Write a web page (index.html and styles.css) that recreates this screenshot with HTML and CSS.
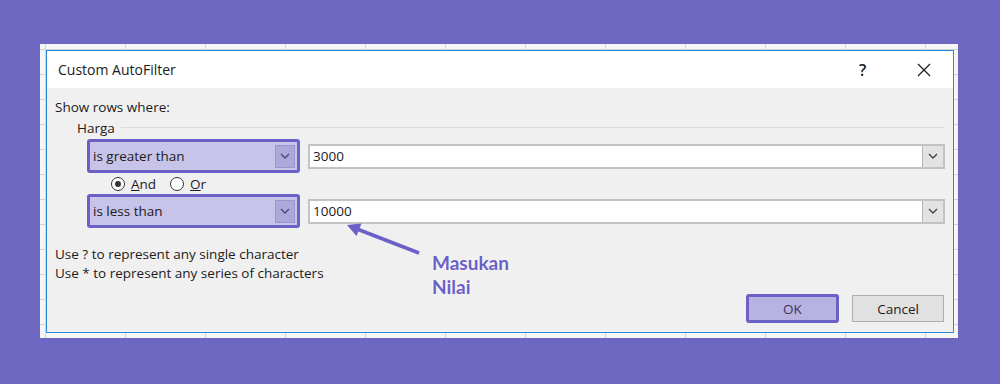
FILE: index.html
```html
<!DOCTYPE html>
<html>
<head>
    <meta charset="utf-8">
    <link rel="stylesheet" href="styles.css">
    <title>Custom AutoFilter</title>
</head>
<body>
<div class="sheet">
    <div class="dialog">
        <div class="titlebar">
            <span class="title">Custom AutoFilter</span>
            <span class="help">?</span>
            <svg class="close" width="14" height="14" viewBox="0 0 14 14">
                <path d="M1 1 L13 13 M13 1 L1 13" stroke="#222" stroke-width="1.3" fill="none"/>
            </svg>
        </div>
        <div class="content">
            <div class="label">Show rows where:</div>
            <div class="group">
                <span>Harga</span>
                <div class="groupline"></div>
            </div>

            <div class="row">
                <div class="combo">
                    <span class="combotext">is greater than</span>
                    <span class="combobtn">
                        <svg width="10" height="6" viewBox="0 0 10 6"><path d="M1 1 L5 5 L9 1" stroke="#4f4980" stroke-width="1.4" fill="none"/></svg>
                    </span>
                </div>
                <div class="field">
                    <span class="fieldtext">3000</span>
                    <span class="fieldbtn">
                        <svg width="10" height="6" viewBox="0 0 10 6"><path d="M1 1 L5 5 L9 1" stroke="#444" stroke-width="1.4" fill="none"/></svg>
                    </span>
                </div>
            </div>

            <div class="radios">
                <span class="radio checked"></span><span class="rlabel"><u>A</u>nd</span>
                <span class="radio"></span><span class="rlabel"><u>O</u>r</span>
            </div>

            <div class="row row2">
                <div class="combo">
                    <span class="combotext">is less than</span>
                    <span class="combobtn">
                        <svg width="10" height="6" viewBox="0 0 10 6"><path d="M1 1 L5 5 L9 1" stroke="#4f4980" stroke-width="1.4" fill="none"/></svg>
                    </span>
                </div>
                <div class="field">
                    <span class="fieldtext">10000</span>
                    <span class="fieldbtn">
                        <svg width="10" height="6" viewBox="0 0 10 6"><path d="M1 1 L5 5 L9 1" stroke="#444" stroke-width="1.4" fill="none"/></svg>
                    </span>
                </div>
            </div>

            <div class="hints">
                <div>Use ? to represent any single character</div>
                <div>Use * to represent any series of characters</div>
            </div>

            <div class="buttons">
                <button class="btn ok">OK</button>
                <button class="btn cancel">Cancel</button>
            </div>
        </div>

        <!-- annotation over the dialog -->
        <svg class="arrow" width="85" height="40" viewBox="0 0 85 40">
            <path d="M15 9 L77 33" stroke="#6a60c8" stroke-width="3.5" fill="none"/>
            <polygon points="5,5 19.5,3.5 14.5,16" fill="#6a60c8"/>
        </svg>
        <div class="note">Masukan<br>Nilai</div>
    </div>
</div>
</body>
</html>
```

FILE: styles.css
```css
body{
    margin: 0;
    width: 1000px;
    height: 384px;
    background: #6e67c2;
    padding: 44px 0 0 40px;
    box-sizing: border-box;
    font-family: "Open Sans", "Noto Sans", sans-serif;
    color: #1b1b1b;
}

.sheet{
    width: 918px;
    height: 294px;
    background-color: #f6f6f6;
    background-image:
        linear-gradient(to right, #d3d3d3 1px, transparent 1px),
        linear-gradient(to bottom, #d3d3d3 1px, transparent 1px);
    background-size: 80px 100%, 100% 25px;
    background-position: 5px 0, 0 5px;
    padding: 6px 0 0 6px;
    box-sizing: border-box;
}

.dialog{
    position: relative;
    width: 908px;
    height: 283px;
    border: 1px solid #2b8ad8;
    box-sizing: border-box;
    background: #f0f0f0;
    display: flex;
    flex-direction: column;
}

.titlebar{
    height: 37px;
    background: #fff;
    display: flex;
    align-items: center;
    padding: 0 0 0 11px;
}
.title{
    font-size: 14px;
    flex: 1;
}
.help{
    font-size: 16px;
    font-weight: 600;
    width: 14px;
    margin-right: 44px;
}
.close{
    margin-right: 22px;
}

.content{
    padding: 10px 8px 0 8px;
    font-size: 13.5px;
}

.label{
    line-height: 18px;
}

.group{
    display: flex;
    align-items: center;
    padding-left: 22px;
    height: 20px;
    margin-top: 2px;
}
.groupline{
    flex: 1;
    height: 1px;
    background: #dcdcdc;
    margin: 0 0 2px 6px;
}

.row{
    display: flex;
    align-items: center;
    padding-left: 32px;
    margin-top: 1px;
    gap: 8px;
}
.row2{
    margin-top: 0;
}

.combo{
    width: 213px;
    height: 34px;
    border: 3px solid #6b60c6;
    border-radius: 3px;
    background: #c7c3e9;
    box-sizing: border-box;
    display: flex;
    align-items: center;
    padding: 2px 2px 2px 3px;
}
.combotext{
    flex: 1;
}
.combobtn{
    width: 20px;
    height: 23px;
    background: #aea8da;
    border: 1px solid #9c95cf;
    box-sizing: border-box;
    display: flex;
    align-items: center;
    justify-content: center;
}

.field{
    width: 637px;
    height: 25px;
    border: 2px solid #c3c3c3;
    box-sizing: border-box;
    background: #fff;
    display: flex;
    align-items: center;
}
.fieldtext{
    flex: 1;
    padding-left: 3px;
}
.fieldbtn{
    width: 20px;
    height: 21px;
    background: #e3e3e3;
    border-left: 1px solid #b5b5b5;
    display: flex;
    align-items: center;
    justify-content: center;
}

.radios{
    display: flex;
    align-items: center;
    height: 21px;
    padding-left: 56px;
}
.radio{
    width: 14px;
    height: 14px;
    border: 1px solid #333;
    border-radius: 50%;
    background: #fff;
    box-sizing: border-box;
    position: relative;
    margin-right: 6px;
}
.radio.checked::after{
    content: "";
    position: absolute;
    left: 3px;
    top: 3px;
    width: 6px;
    height: 6px;
    border-radius: 50%;
    background: #333;
}
.rlabel{
    margin-right: 14px;
}

.hints{
    margin-top: 17px;
    line-height: 19px;
}

.buttons{
    display: flex;
    justify-content: flex-end;
    gap: 13px;
    margin-top: 11px;
    padding-right: 1px;
}
.btn{
    font-family: "Open Sans", "Noto Sans", sans-serif;
    font-size: 13.5px;
    box-sizing: border-box;
    height: 29px;
    width: 93px;
    padding: 0;
}
.ok{
    background: #b7b2df;
    border: 3px solid #6b60c6;
    border-radius: 3px;
    color: #3b3462;
}
.cancel{
    background: #e1e1e1;
    border: 1px solid #adadad;
    color: #1b1b1b;
    height: 27px;
    width: 92px;
    margin-top: 1px;
}

.arrow{
    position: absolute;
    left: 295px;
    top: 169px;
}
.note{
    position: absolute;
    left: 385px;
    top: 200px;
    font-family: "Lato", sans-serif;
    font-weight: bold;
    font-size: 19px;
    line-height: 24px;
    color: #6a60c8;
    text-shadow: 0 0 2px #fff;
}
```
